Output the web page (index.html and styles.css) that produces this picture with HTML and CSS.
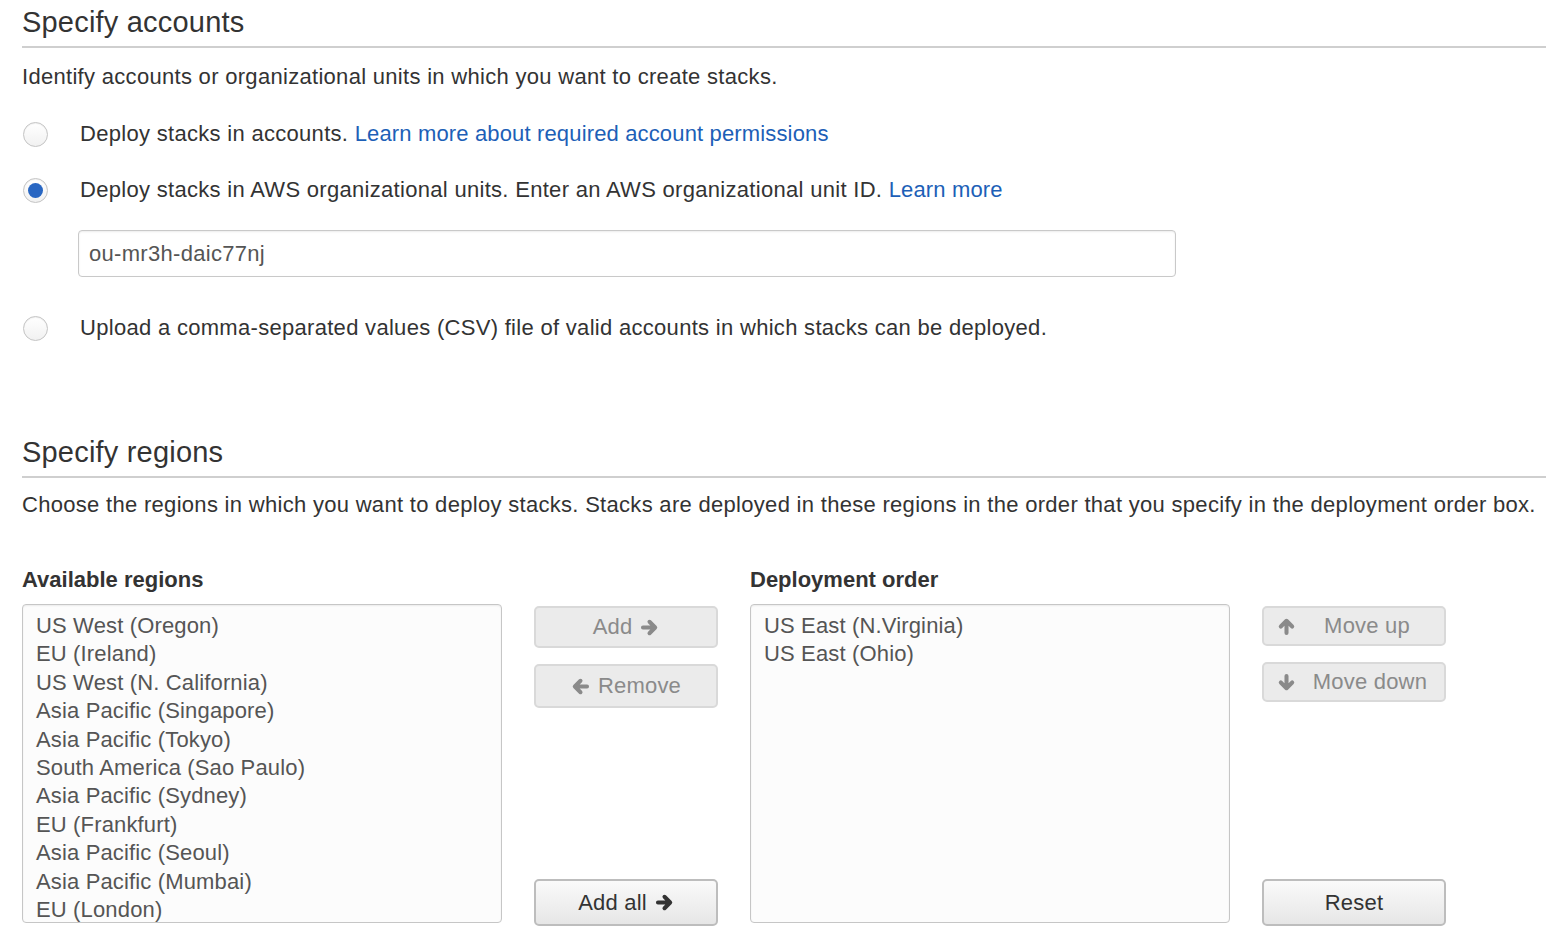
FILE: index.html
```html
<!DOCTYPE html>
<html>
<head>
<meta charset="utf-8">
<link rel="stylesheet" href="styles.css">
</head>
<body>
<div class="page">
  <h2 class="section-title">Specify accounts</h2>
  <p class="desc desc-accounts">Identify accounts or organizational units in which you want to create stacks.</p>

  <div class="radio-row first">
    <span class="radio"></span>
    <span class="radio-label">Deploy stacks in accounts. <a class="link" href="#">Learn more about required account permissions</a></span>
  </div>
  <div class="radio-row second">
    <span class="radio checked"></span>
    <span class="radio-label">Deploy stacks in AWS organizational units. Enter an AWS organizational unit ID. <a class="link" href="#">Learn more</a></span>
  </div>
  <div class="input-wrap">
    <div class="text-input">ou-mr3h-daic77nj</div>
  </div>
  <div class="radio-row third">
    <span class="radio"></span>
    <span class="radio-label">Upload a comma-separated values (CSV) file of valid accounts in which stacks can be deployed.</span>
  </div>

  <h2 class="section-title regions-title">Specify regions</h2>
  <p class="desc desc-regions">Choose the regions in which you want to deploy stacks. Stacks are deployed in these regions in the order that you specify in the deployment order box.</p>

  <div class="picker">
    <div class="list-col">
      <div class="list-label">Available regions</div>
      <div class="listbox">
        <div class="item">US West (Oregon)</div>
        <div class="item">EU (Ireland)</div>
        <div class="item">US West (N. California)</div>
        <div class="item">Asia Pacific (Singapore)</div>
        <div class="item">Asia Pacific (Tokyo)</div>
        <div class="item">South America (Sao Paulo)</div>
        <div class="item">Asia Pacific (Sydney)</div>
        <div class="item">EU (Frankfurt)</div>
        <div class="item">Asia Pacific (Seoul)</div>
        <div class="item">Asia Pacific (Mumbai)</div>
        <div class="item">EU (London)</div>
      </div>
    </div>
    <div class="btn-col">
      <button class="btn disabled btn-add">Add <svg class="ico" viewBox="0 0 16 16"><path d="M2.5 8H12.5M8 3.2L12.8 8 8 12.8"/></svg></button>
      <button class="btn disabled btn-remove"><svg class="ico" viewBox="0 0 16 16"><path d="M13.5 8H3.5M8 3.2L3.2 8 8 12.8"/></svg> Remove</button>
      <button class="btn active btn-addall">Add all <svg class="ico" viewBox="0 0 16 16"><path d="M2.5 8H12.5M8 3.2L12.8 8 8 12.8"/></svg></button>
    </div>
    <div class="list-col">
      <div class="list-label">Deployment order</div>
      <div class="listbox">
        <div class="item">US East (N.Virginia)</div>
        <div class="item">US East (Ohio)</div>
      </div>
    </div>
    <div class="btn-col">
      <button class="btn disabled btn-move btn-up"><svg class="ico" viewBox="0 0 16 16"><path d="M8 13.5V3.5M3.2 8L8 3.2 12.8 8"/></svg><span class="move-text">Move up</span></button>
      <button class="btn disabled btn-move btn-down"><svg class="ico" viewBox="0 0 16 16"><path d="M8 2.5v10M3.2 8L8 12.8 12.8 8"/></svg><span class="move-text">Move down</span></button>
      <button class="btn active btn-reset">Reset</button>
    </div>
  </div>
</div>
</body>
</html>
```

FILE: styles.css
```css
* { box-sizing: border-box; }
html, body { margin: 0; padding: 0; background: #fff; }
body {
  font-family: "Liberation Sans", Arial, Helvetica, sans-serif;
  color: #333;
  font-size: 22px;
  letter-spacing: 0.3px;
}
.page {
  padding-left: 22px;
  width: 1546px;
}
.section-title {
  margin: 0;
  font-weight: normal;
  font-size: 29px;
  letter-spacing: 0.2px;
  line-height: 34px;
  padding-top: 5px;
  padding-bottom: 7px;
  border-bottom: 2px solid #cfcfcf;
  color: #333;
}
.desc {
  margin: 0;
  line-height: 28px;
}
.desc-accounts { margin-top: 15px; }
.radio-row {
  display: flex;
  align-items: center;
  height: 28px;
}
.radio-row.first { margin-top: 29px; }
.radio-row.second { margin-top: 28px; }
.radio-row.third { margin-top: 37px; }
.radio {
  width: 25px;
  height: 25px;
  border-radius: 50%;
  border: 1px solid #c4c4c4;
  background: linear-gradient(#fff, #f1f1f1);
  box-shadow: inset 0 1px 1px rgba(0,0,0,0.06);
  margin-left: 1px;
  position: relative;
  flex: none;
}
.radio.checked::after {
  content: "";
  position: absolute;
  left: 4px;
  top: 4px;
  width: 15px;
  height: 15px;
  border-radius: 50%;
  background: #2866c2;
}
.radio-label {
  margin-left: 32px;
  line-height: 28px;
}
.link {
  color: #1d5fb7;
  text-decoration: none;
  letter-spacing: 0.15px;
}
.input-wrap {
  margin-top: 26px;
  padding-left: 56px;
}
.text-input {
  width: 1098px;
  height: 47px;
  border: 1px solid #c9c9c9;
  border-radius: 4px;
  box-shadow: inset 0 1px 2px rgba(0,0,0,0.08);
  padding-left: 10px;
  line-height: 45px;
  color: #555;
}
.regions-title { margin-top: 88px; }
.desc-regions { margin-top: 13px; }

.picker {
  display: flex;
  align-items: flex-start;
  margin-top: 47px;
  gap: 32px;
}
.list-col {
  width: 480px;
  display: flex;
  flex-direction: column;
}
.list-label {
  font-weight: bold;
  letter-spacing: 0;
  line-height: 28px;
  color: #333;
}
.listbox {
  margin-top: 10px;
  height: 319px;
  border: 1px solid #c6c6c6;
  border-radius: 4px;
  background: #fcfcfc;
  box-shadow: inset 0 1px 2px rgba(0,0,0,0.07);
  padding: 7px 13px;
  overflow: hidden;
}
.item {
  line-height: 28.4px;
  letter-spacing: 0.15px;
  color: #555;
  white-space: nowrap;
}
.btn-col {
  width: 184px;
  height: 360px;
  display: flex;
  flex-direction: column;
  padding-top: 38px;
}
.btn {
  width: 184px;
  flex: none;
  font-family: inherit;
  font-size: 22px;
  letter-spacing: 0.2px;
  border-radius: 5px;
  display: flex;
  align-items: center;
  justify-content: center;
  gap: 8px;
  padding: 0;
  margin: 0;
}
.btn.disabled {
  background: #ebebeb;
  border: 2px solid #d9d9d9;
  color: #8a8a8a;
}
.btn.active {
  background: linear-gradient(#fafafa, #e6e6e6);
  border: 2px solid #bdbdbd;
  color: #333;
}
.ico {
  width: 19px;
  height: 19px;
  fill: none;
  stroke: currentColor;
  stroke-width: 3.4;
  stroke-linecap: round;
  stroke-linejoin: round;
}
.btn-add { height: 42px; margin-top: 2px; }
.btn-remove { height: 44px; margin-top: 16px; }
.btn-addall { height: 47px; margin-top: auto; }
.btn-move {
  height: 40px;
  justify-content: flex-start;
  padding-left: 13px;
  gap: 0;
}
.btn-move .move-text {
  flex: 1;
  text-align: center;
}
.btn-up { margin-top: 2px; }
.btn-up .move-text { padding-right: 6px; }
.btn-down { margin-top: 16px; }
.btn-reset { height: 47px; margin-top: auto; }
```
